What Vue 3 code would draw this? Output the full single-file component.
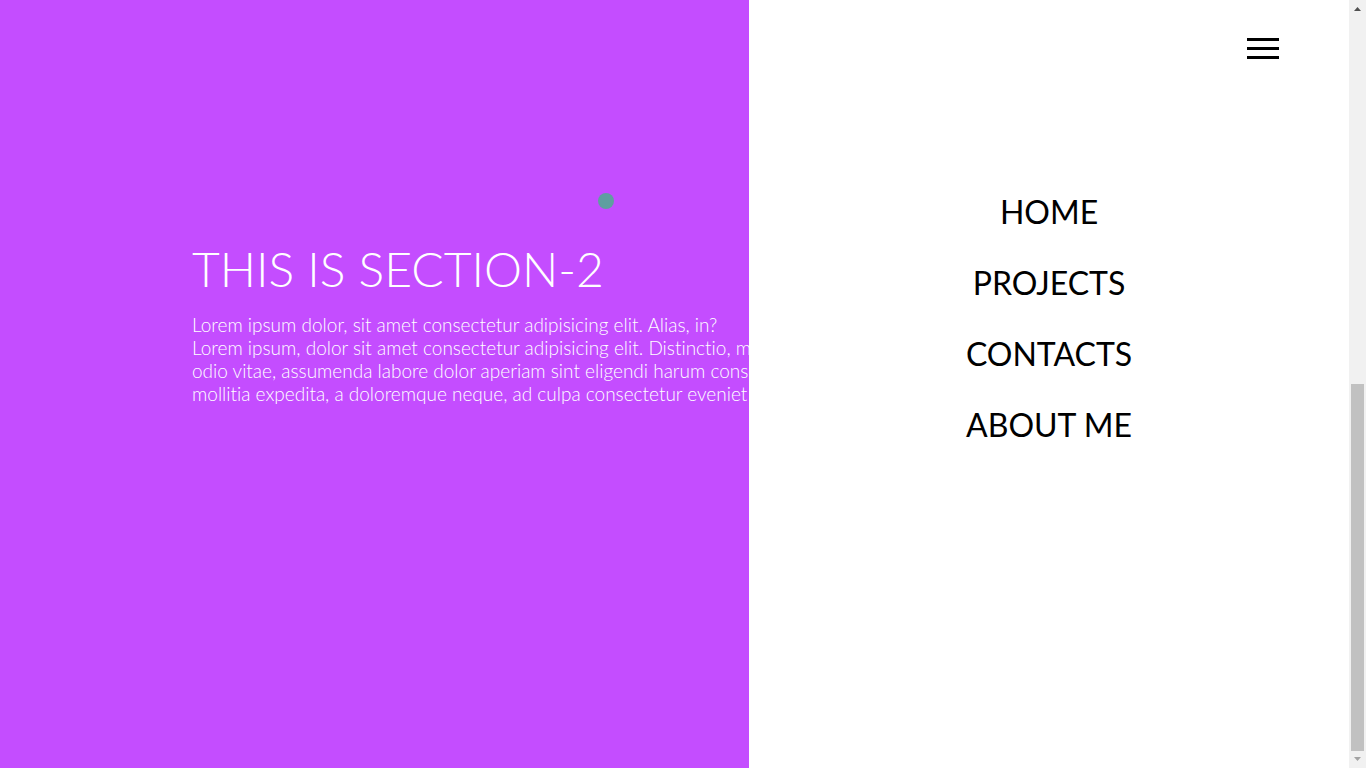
<script setup>
const links = ['Home', 'Projects', 'Contacts', 'About me']
</script>

<template>
  <div class="page">
    <div class="stage">
      <section class="section">
        <h1>This is section-2</h1>
        <p>
          Lorem ipsum dolor, sit amet consectetur adipisicing elit. Alias, in?<br />
          Lorem ipsum, dolor sit amet consectetur adipisicing elit. Distinctio, ma<br />
          odio vitae, assumenda labore dolor aperiam sint eligendi harum conse<br />
          mollitia expedita, a doloremque neque, ad culpa consectetur eveniet a
        </p>
      </section>
      <aside class="panel">
        <button class="burger" type="button" aria-label="Menu">
          <span></span><span></span><span></span>
        </button>
        <nav>
          <a v-for="link in links" :key="link" href="#">{{ link }}</a>
        </nav>
      </aside>
      <div class="cursor"></div>
    </div>
    <div class="scrollbar" aria-hidden="true">
      <svg width="17" height="17" viewBox="0 0 17 17"><path d="M5 11h7L8.500 7z" fill="#505050" /></svg>
      <div class="track"><div class="thumb"></div></div>
      <svg width="17" height="17" viewBox="0 0 17 17"><path d="M5 6h7L8.500 10z" fill="#a3a3a3" /></svg>
    </div>
  </div>
</template>

<style>
html, body { margin: 0; }
</style>

<style scoped>
* { box-sizing: border-box; }
.page {
  display: flex;
  height: 100vh;
  overflow: hidden;
  font-family: Lato, sans-serif;
  font-variant-ligatures: none;
}
.stage {
  position: relative;
  flex: 1;
  min-width: 0;
  display: flex;
  background: #c44dff;
}
.section {
  flex: 1;
  min-width: 0;
  overflow: hidden;
  padding: 240px 0 0 192px;
  color: #fff;
  white-space: nowrap;
}
h1 {
  margin: 0 0 15px;
  font-size: 48px;
  line-height: 58px;
  font-weight: 300;
  text-transform: uppercase;
}
p {
  margin: 0;
  font-size: 19px;
  line-height: 23px;
  font-weight: 300;
}
.panel {
  width: 600px;
  display: flex;
  flex-direction: column;
  background: #fff;
}
.burger {
  align-self: flex-end;
  display: flex;
  flex-direction: column;
  gap: 6px;
  width: 32px;
  margin: 38px 70px 0 0;
  padding: 0;
  border: 0;
  background: none;
  cursor: pointer;
}
.burger span {
  width: 100%;
  height: 3px;
  background: #000;
}
nav {
  display: flex;
  flex-direction: column;
  align-items: center;
  gap: 32px;
  margin-top: 133px;
}
nav a {
  color: #000;
  font-size: 32px;
  line-height: 39px;
  text-decoration: none;
  text-transform: uppercase;
}
.cursor {
  position: absolute;
  left: 598px;
  top: 193px;
  width: 16px;
  height: 16px;
  border-radius: 50%;
  background: cadetblue;
}
.scrollbar {
  display: flex;
  flex-direction: column;
  width: 17px;
  background: #f1f1f1;
}
.scrollbar svg { display: block; }
.track {
  flex: 1;
  display: flex;
  align-items: flex-end;
  padding: 0 2px;
}
.thumb {
  width: 100%;
  height: 50%;
  background: #c1c1c1;
}
</style>
